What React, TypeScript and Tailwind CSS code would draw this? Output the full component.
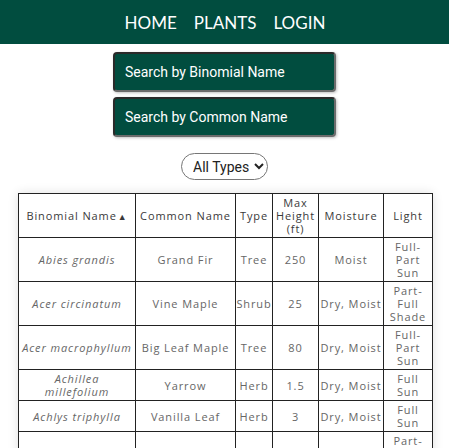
import React, { useState } from 'react';

type Plant = {
    binomial: string;
    common: string;
    type: string;
    height: string;
    moisture: string;
    light: string;
};

const plants: Plant[] = [
    { binomial: 'Abies grandis', common: 'Grand Fir', type: 'Tree', height: '250', moisture: 'Moist', light: 'Full-Part Sun' },
    { binomial: 'Acer circinatum', common: 'Vine Maple', type: 'Shrub', height: '25', moisture: 'Dry, Moist', light: 'Part-Full Shade' },
    { binomial: 'Acer macrophyllum', common: 'Big Leaf Maple', type: 'Tree', height: '80', moisture: 'Dry, Moist', light: 'Full-Part Sun' },
    { binomial: 'Achillea millefolium', common: 'Yarrow', type: 'Herb', height: '1.5', moisture: 'Dry, Moist', light: 'Full Sun' },
    { binomial: 'Achlys triphylla', common: 'Vanilla Leaf', type: 'Herb', height: '3', moisture: 'Dry, Moist', light: 'Full Sun' },
    { binomial: 'Adiantum pedatum', common: 'Maidenhair', type: 'Fern', height: '2', moisture: 'Moist', light: 'Part-Full Shade' },
    { binomial: 'Alnus rubra', common: 'Red Alder', type: 'Tree', height: '60', moisture: 'Moist, Wet', light: 'Full Sun' },
];

export default function App() {
    const [filter, setFilter] = useState('all');

    return (
        <div className="min-h-screen bg-white" style={{ fontFamily: 'Roboto, "Liberation Sans", sans-serif' }}>
            {/* Nav */}
            <nav className="h-[44px] bg-[#014d3f] flex items-center justify-center gap-[17px] pt-[1px] pl-[1px]">
                {['HOME', 'PLANTS', 'LOGIN'].map(item => (
                    <a
                        key={item}
                        href="#"
                        className="text-white text-[17px] tracking-normal font-['Lato',sans-serif]"
                    >
                        {item}
                    </a>
                ))}
            </nav>

            {/* Search inputs */}
            <div className="flex flex-col items-center gap-[5px] mt-[8px]">
                <SearchBox placeholder="Search by Binomial Name" />
                <SearchBox placeholder="Search by Common Name" />
            </div>

            {/* Type filter */}
            <div className="flex justify-center mt-[16px]">
                <select
                    value={filter}
                    onChange={e => setFilter(e.target.value)}
                    className="h-[27px] w-[87px] rounded-full border border-[#767676] bg-white pl-[7px] text-[14px] text-[#222]"
                >
                    <option value="all">All Types</option>
                    <option value="tree">Tree</option>
                    <option value="shrub">Shrub</option>
                    <option value="herb">Herb</option>
                    <option value="fern">Fern</option>
                </select>
            </div>

            {/* Plants table */}
            <div className="flex justify-center mt-[13px] pl-[2px]">
                <table className="table-fixed w-[414px] border-collapse shadow-[0_0_10px_rgba(0,0,0,0.12)] text-[11px] leading-[13px] tracking-[0.9px] text-[#666] font-['Open_Sans',sans-serif]">
                    <colgroup>
                        <col className="w-[117px]" />
                        <col className="w-[100px]" />
                        <col className="w-[37px]" />
                        <col className="w-[46px]" />
                        <col className="w-[65px]" />
                        <col className="w-[49px]" />
                    </colgroup>
                    <thead>
                        <tr className="h-[44px] text-[#3a3a3a]">
                            <th className="border border-[#222] px-[2px] font-medium">
                                Binomial Name<span className="text-[9px] ml-[1px]">▲</span>
                            </th>
                            <th className="border border-[#222] px-[2px] font-medium">Common Name</th>
                            <th className="border border-[#222] px-0 font-medium">Type</th>
                            <th className="border border-[#222] px-0 font-medium">Max Height (ft)</th>
                            <th className="border border-[#222] px-[2px] font-medium">Moisture</th>
                            <th className="border border-[#222] px-[2px] font-medium">Light</th>
                        </tr>
                    </thead>
                    <tbody>
                        {plants.map(p => (
                            <tr key={p.binomial} className="text-center">
                                <td className="border border-[#222] px-[2px] py-[2px] italic">{p.binomial}</td>
                                <td className="border border-[#222] px-[2px] py-[2px]">{p.common}</td>
                                <td className="border border-[#222] px-0 py-[2px]">{p.type}</td>
                                <td className="border border-[#222] px-0 py-[2px]">{p.height}</td>
                                <td className="border border-[#222] px-0 py-[2px]">{p.moisture}</td>
                                <td className="border border-[#222] px-[2px] py-[2px]">{p.light}</td>
                            </tr>
                        ))}
                    </tbody>
                </table>
            </div>
        </div>
    );
}

function SearchBox({ placeholder }: { placeholder: string }) {
    return (
        <input
            type="text"
            placeholder={placeholder}
            className="w-[223px] h-[40px] rounded-[4px] border-2 border-t-[#2a2a2a] border-l-[#2a2a2a] border-r-[#6b6b6b] border-b-[#6b6b6b] bg-[#014d3f] px-[10px] text-[14px] text-white placeholder:text-white shadow-[1px_1px_3px_rgba(0,0,0,0.25)] outline-none"
        />
    );
}
